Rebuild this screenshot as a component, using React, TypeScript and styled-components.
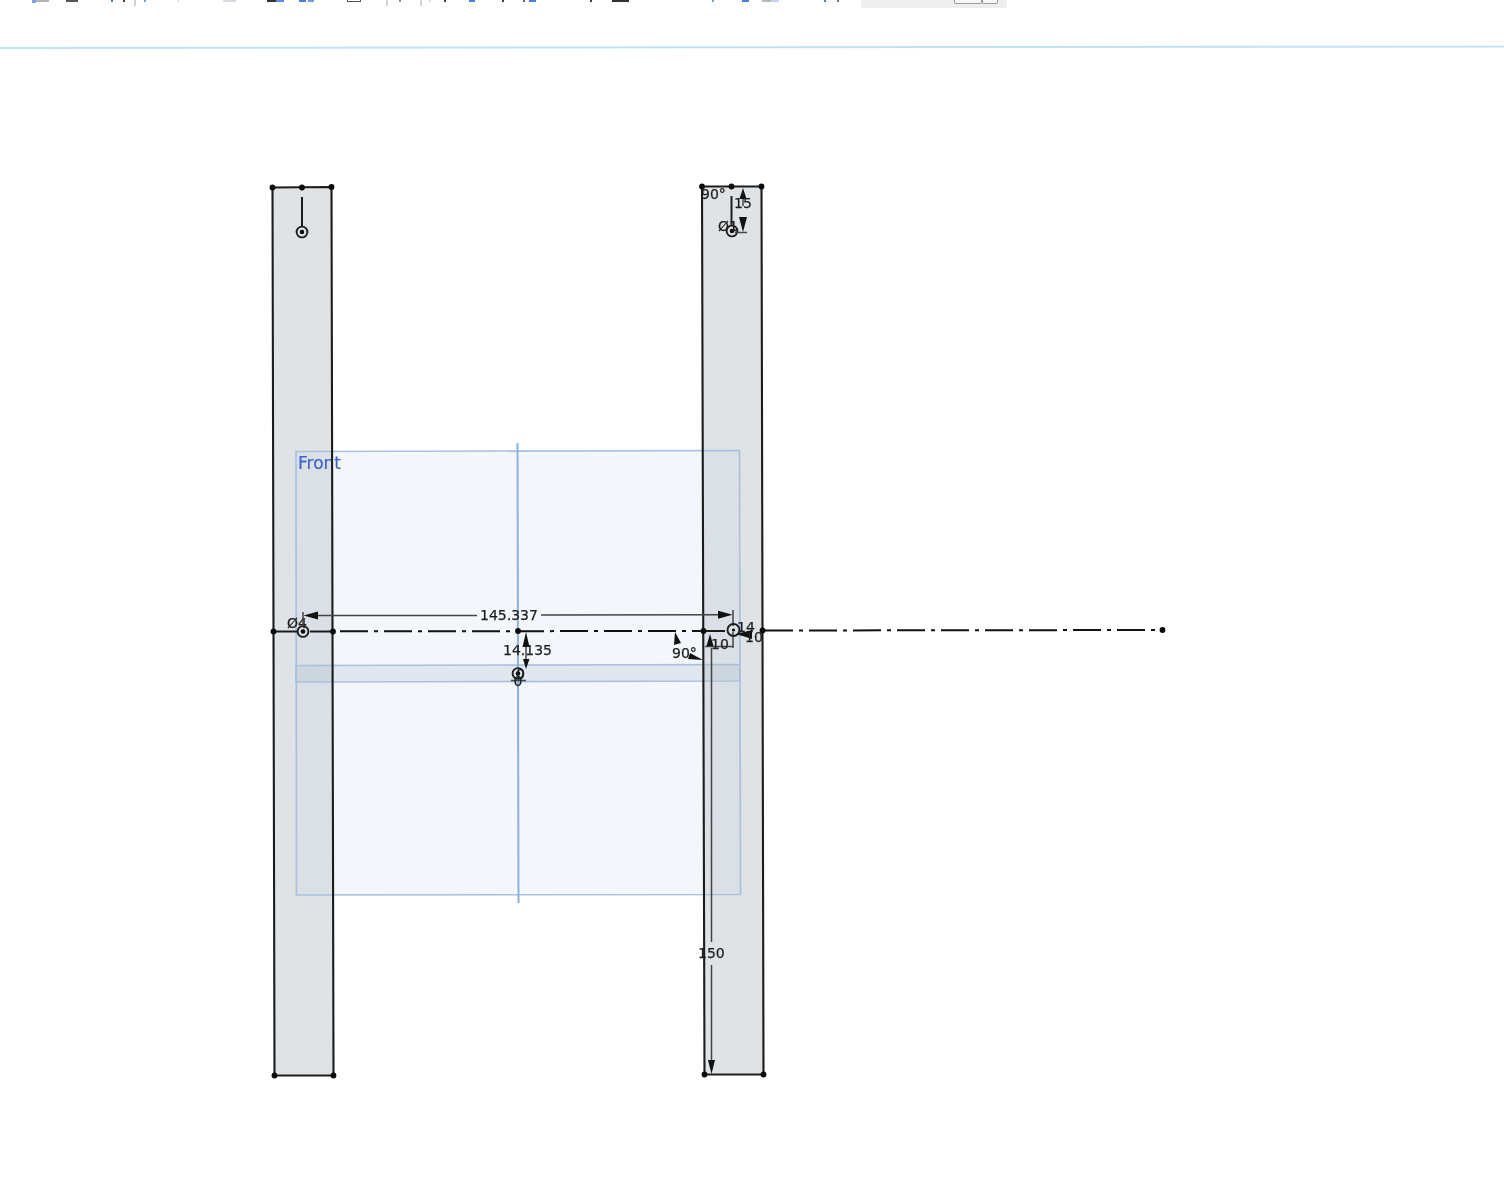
import React from "react";
import styled, { createGlobalStyle } from "styled-components";

const Global = createGlobalStyle`
  html, body { margin: 0; padding: 0; background: #fff; }
  #root { width: 1504px; height: 1197px; overflow: hidden; background: #fff; }
`;

const Page = styled.div`
  display: flex;
  flex-direction: column;
  width: 1504px;
  height: 1197px;
`;

const Toolbar = styled.div`
  display: flex;
  align-items: flex-start;
  height: 44px;
  flex: none;
  padding-left: 32px;
  filter: blur(0.4px);
`;

const Mark = styled.span<{ $w: number; $gap: number; $c: string; $h?: number }>`
  flex: none;
  width: ${(p) => p.$w}px;
  height: ${(p) => p.$h ?? 2}px;
  margin-right: ${(p) => p.$gap}px;
  background: ${(p) => p.$c};
`;

const Separator = styled.span<{ $gap: number }>`
  flex: none;
  width: 2px;
  height: 6px;
  margin-right: ${(p) => p.$gap}px;
  background: #d4d4d6;
`;

const OutlineMark = styled.span<{ $gap: number }>`
  flex: none;
  width: 14px;
  height: 2px;
  margin-right: ${(p) => p.$gap}px;
  border: 1px solid #555;
  border-top: 0;
  box-sizing: border-box;
`;

const Chip = styled.div`
  flex: none;
  display: flex;
  justify-content: flex-end;
  align-items: flex-start;
  box-sizing: border-box;
  width: 146px;
  height: 8px;
  padding-right: 9px;
  background: #eeeeee;
  border-radius: 0 0 3px 3px;
`;

const ChipButton = styled.span<{ $w: number }>`
  width: ${(p) => p.$w}px;
  height: 4px;
  box-sizing: border-box;
  background: #f7f7f7;
  border: 1px solid #9a9a9a;
  border-top: 0;
  border-radius: 0 0 2px 2px;
`;

const Drawing = styled.svg`
  display: block;
  flex: none;
  filter: blur(0.45px);
`;

const DimText = styled.text`
  font-family: "DejaVu Sans", sans-serif;
  font-size: 14px;
  fill: #1e1e1e;
  stroke: #1e1e1e;
  stroke-width: 0.25;
`;

const PlaneLabel = styled.text`
  font-family: "DejaVu Sans", sans-serif;
  font-size: 17px;
  fill: #3d63c6;
  stroke: #3d63c6;
  stroke-width: 0.2;
`;

const Edge = styled.polygon`
  fill: none;
  stroke: #1c1c1c;
  stroke-width: 2.1;
`;

const BarFill = styled.polygon`
  fill: #e0e3e6;
`;

const Plane = styled.polygon<{ $strip?: boolean }>`
  fill: ${(p) => (p.$strip ? "rgba(165,180,200,0.24)" : "rgba(202,215,233,0.23)")};
  stroke: #a9c1de;
  stroke-width: 1.7;
`;

const PlaneAxis = styled.line`
  stroke: #8db1dc;
  stroke-width: 2;
`;

const Construction = styled.line`
  stroke: #111;
  stroke-width: 2;
  stroke-dasharray: 28 6 4 6;
`;

const SolidLine = styled.line`
  stroke: #1c1c1c;
  stroke-width: 2;
`;

const DimLine = styled.line`
  stroke: #444;
  stroke-width: 1.5;
`;

const Arrow = styled.polygon`
  fill: #111;
`;

const Ring = styled.circle`
  fill: none;
  stroke: #1c1c1c;
  stroke-width: 1.9;
`;

const Dot = styled.circle`
  fill: #0a0a0a;
`;

const dots: [number, number][] = [
  [272.5, 187.5], [302, 187.5], [331.5, 187], [274.5, 1075.5], [333.5, 1075.5],
  [702, 186.5], [731.5, 186.5], [761.5, 186.5], [704.5, 1074.5], [763.5, 1074.5],
  [273.5, 631.5], [333, 631.5], [518, 631], [703.5, 631], [762.5, 630.5], [1162.5, 630],
];

const Hole = ({ x, y }: { x: number; y: number }) => (
  <>
    <Ring cx={x} cy={y} r={5.4} />
    <Dot cx={x} cy={y} r={2.3} />
  </>
);

export default function App() {
  return (
    <Page>
      <Global />
      <Toolbar>
        <Mark $w={4} $gap={0} $c="#7d9fdc" $h={3} />
        <Mark $w={13} $gap={17} $c="#b5b5b8" />
        <Mark $w={12} $gap={33} $c="#555" />
        <Mark $w={2} $gap={10} $c="#4a78d0" />
        <Mark $w={2} $gap={9} $c="#444" />
        <Separator $gap={8} />
        <Mark $w={2} $gap={32} $c="#7d9fdc" />
        <Mark $w={1} $gap={44} $c="#c8c8c8" />
        <Mark $w={13} $gap={31} $c="#d8d8e4" />
        <Mark $w={9} $gap={0} $c="#333" />
        <Mark $w={8} $gap={15} $c="#5f8ddc" />
        <Mark $w={7} $gap={2} $c="#4f80d8" />
        <Mark $w={6} $gap={33} $c="#6f9ae0" />
        <OutlineMark $gap={25} />
        <Separator $gap={11} />
        <Mark $w={2} $gap={19} $c="#888" />
        <Separator $gap={7} />
        <Mark $w={2} $gap={13} $c="#dcdcec" />
        <Mark $w={2} $gap={23} $c="#444" />
        <Mark $w={6} $gap={27} $c="#4f80d8" />
        <Mark $w={2} $gap={19} $c="#444" />
        <Mark $w={2} $gap={4} $c="#666" />
        <Mark $w={7} $gap={54} $c="#4f80d8" />
        <Mark $w={2} $gap={20} $c="#444" />
        <Mark $w={17} $gap={83} $c="#333" />
        <Mark $w={2} $gap={28} $c="#7d9fdc" />
        <Mark $w={7} $gap={13} $c="#4f80d8" />
        <Mark $w={9} $gap={0} $c="#b8b8b8" />
        <Mark $w={8} $gap={45} $c="#c4d4f0" />
        <Mark $w={2} $gap={11} $c="#4f80d8" />
        <Mark $w={2} $gap={22} $c="#777" />
        <Chip>
          <ChipButton $w={28} />
          <ChipButton $w={16} />
        </Chip>
      </Toolbar>
      <Drawing width={1504} height={1153} viewBox="0 44 1504 1153">
        <line x1={0} y1={48} x2={1504} y2={46.6} stroke="#bfe3f6" strokeWidth={1.9} />

        <BarFill points="272.5,187.5 331.5,187 333.5,1075.5 274.5,1075.5" />
        <BarFill points="702,186.5 761.5,186.5 763.5,1074.5 704.5,1074.5" />

        <Plane points="296,451.5 739.5,450.5 740.5,894.5 296.5,895" />
        <Plane $strip points="296,665.5 740,664.5 740,681 296,682" />
        <PlaneAxis x1={517.5} y1={443} x2={518.5} y2={903} />
        <PlaneLabel x={298} y={468.5}>Front</PlaneLabel>

        <Edge points="272.5,187.5 331.5,187 333.5,1075.5 274.5,1075.5" />
        <Edge points="702,186.5 761.5,186.5 763.5,1074.5 704.5,1074.5" />

        <SolidLine x1={273.5} y1={631.5} x2={297} y2={631.5} />
        <SolidLine x1={310} y1={631.5} x2={333} y2={631.5} />
        <Construction x1={340} y1={631.3} x2={703} y2={631} />
        <SolidLine x1={704} y1={631} x2={725} y2={631} />
        <Construction x1={765} y1={630.5} x2={1162} y2={630} />

        <SolidLine x1={302} y1={197} x2={302} y2={226} />
        <Hole x={302} y={232} />

        <SolidLine x1={731.5} y1={196} x2={731.5} y2={225} />
        <Hole x={732} y={231} />
        <DimLine x1={735} y1={232.5} x2={747} y2={232.5} />
        <DimLine x1={743} y1={198} x2={743} y2={206} />
        <Arrow points="743,188 739.5,199 746.5,199" />
        <Arrow points="743,232 739,217 747,217" />
        <DimText x={701} y={199}>90°</DimText>
        <DimText x={734} y={208}>15</DimText>
        <DimText x={718} y={231}>Ø1</DimText>

        <Hole x={303} y={631.5} />
        <DimText x={287} y={628}>Ø4</DimText>
        <DimLine x1={303} y1={612} x2={303} y2={626} />
        <DimLine x1={733} y1={610} x2={733} y2={626} />
        <DimLine x1={316} y1={615.5} x2={477} y2={615.5} />
        <DimLine x1={541} y1={615} x2={720} y2={614.8} />
        <Arrow points="303.5,615.5 318,611.5 318,619.5" />
        <Arrow points="732.5,614.8 718,610.8 718,618.8" />
        <DimText x={480} y={620}>145.337</DimText>

        <DimLine x1={526} y1={645} x2={526} y2={660} />
        <Arrow points="526,632 522.5,647 529.5,647" />
        <Arrow points="526,669 523,659 529.5,659" />
        <DimText x={503} y={655}>14.135</DimText>
        <Hole x={518} y={673.5} />
        <DimLine x1={511} y1={680.5} x2={526} y2={680.5} />
        <DimText x={513.5} y={686}>0</DimText>
        <DimText x={516} y={679}>0</DimText>

        <Arrow points="675,632 674,645 681,643" />
        <Arrow points="703,660 690,653 688,659" />
        <DimText x={672} y={658}>90°</DimText>

        <DimLine x1={705} y1={646.5} x2={733} y2={646.5} />
        <DimLine x1={733} y1={632} x2={733} y2={648} />
        <Arrow points="710,634 706.5,646 713.5,646" />
        <DimText x={711} y={649}>10</DimText>
        <Ring cx={733.5} cy={630} r={6} />
        <Dot cx={733.5} cy={630} r={1.6} />
        <DimText x={737} y={632}>14</DimText>
        <Arrow points="736,634 752,630 752,639" />
        <DimText x={745} y={642}>10</DimText>

        <DimLine x1={711.5} y1={648} x2={711.5} y2={942} />
        <DimLine x1={711.5} y1={965} x2={711.5} y2={1062} />
        <Arrow points="711.5,1074 708,1060 715,1060" />
        <DimText x={698} y={958}>150</DimText>

        {dots.map(([x, y]) => (
          <Dot key={`${x}-${y}`} cx={x} cy={y} r={2.9} />
        ))}
      </Drawing>
    </Page>
  );
}
